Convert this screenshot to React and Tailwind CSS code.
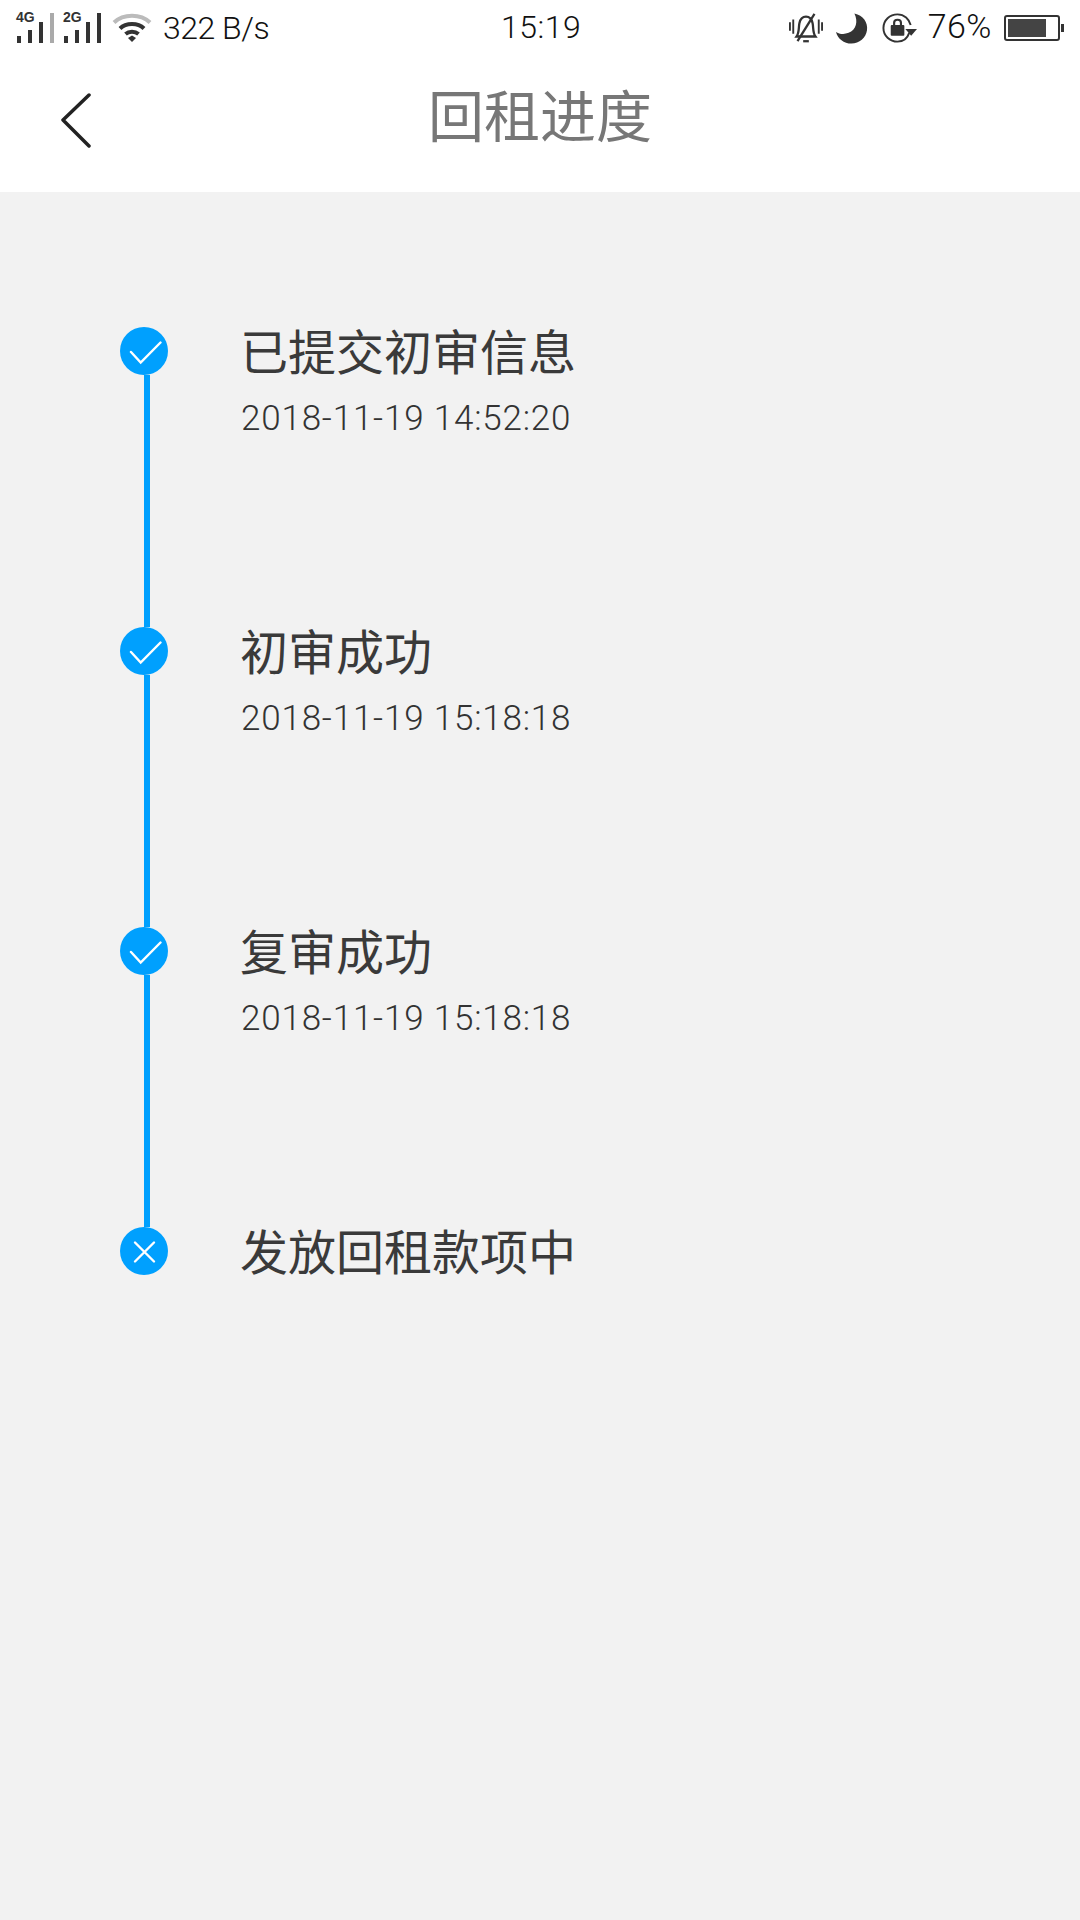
const cjk = "font-['Liberation_Sans','Noto_Sans_CJK_SC',sans-serif]";

const steps = [
  { title: "已提交初审信息", time: "2018-11-19 14:52:20", done: true },
  { title: "初审成功", time: "2018-11-19 15:18:18", done: true },
  { title: "复审成功", time: "2018-11-19 15:18:18", done: true },
  { title: "发放回租款项中", done: false },
];

// signal bars with the network label above them
const Signal = ({ label, last }) => (
  <div className="relative w-[40px] h-[30px]">
    <span className="absolute left-0 top-[-3px] text-[14px] leading-[14px] font-bold text-[#333] font-['Liberation_Sans',sans-serif]">
      {label}
    </span>
    <svg width="40" height="30" viewBox="0 0 40 30" className="absolute left-0 top-0">
      <rect x="1" y="23" width="4" height="7" fill="#333" />
      <rect x="12" y="17" width="4" height="13" fill="#333" />
      <rect x="23" y="9" width="4" height="21" fill="#333" />
      <rect x="34" y="0" width="4" height="30" fill={last} />
    </svg>
  </div>
);

const Wifi = () => (
  <svg width="40" height="30" viewBox="0 0 40 30" fill="none" strokeWidth="4">
    <path d="M2 9.500C11.500 0.500 28.500 0.500 38 9.500" stroke="#bbb" />
    <path d="M8 15.500C14 9.500 26 9.500 32 15.500" stroke="#333" />
    <path d="M13.500 21C17 18 23 18 26.500 21" stroke="#333" />
    <path d="M16 25L20 22.500L24 25L20 29Z" fill="#333" />
  </svg>
);

const MutedBell = () => (
  <svg width="34" height="32" viewBox="0 0 36 32" fill="none" stroke="#333" strokeWidth="2.400">
    <path d="M8 25C11 21 10 16 11 11C12 6 15 4 18 4C21 4 24 6 25 11C26 16 25 21 28 25Z" />
    <path d="M27 1L9 30" />
    <path d="M15 30H21" />
    <path d="M1 10V19M4.500 7V22M31.500 7V22M35 10V19" strokeWidth="2" />
  </svg>
);

const Moon = () => (
  <svg width="33" height="32" viewBox="0 0 34 32">
    <path d="M20 1C29 3 34 10 33 18C32 26 25 32 17 32C9 32 3 27 1 20C4 22 9 23 14 21C22 18 24 9 20 1Z" fill="#333" />
  </svg>
);

const RotationLock = () => (
  <svg width="36" height="32" viewBox="0 0 37 32" fill="none">
    <path d="M29 21C27 27 22 30 17 30C9 30 2.500 24 2.500 16C2.500 8 9 2 17 2C24 2 29 7 30.500 13" stroke="#333" strokeWidth="2" />
    <path d="M25 17H37L31 24Z" fill="#333" />
    <rect x="10" y="13" width="14" height="11" rx="1" fill="#333" />
    <path d="M13.500 13V10.500C13.500 6.500 20.500 6.500 20.500 10.500V13" stroke="#333" strokeWidth="2.200" />
  </svg>
);

const Battery = () => (
  <div className="flex items-center">
    <div className="w-[56px] h-[26px] rounded-[3px] border-2 border-[#333] p-[2px] flex">
      <div className="w-[38px] bg-[#444]" />
    </div>
    <div className="w-[3px] h-[8px] ml-[1px] bg-[#333]" />
  </div>
);

const StatusBar = () => (
  <div className="relative h-[55px] flex items-center justify-between text-[#111] text-[32px] font-light leading-none font-['Roboto',sans-serif]">
    <div className="flex items-center pl-[16px] pt-[1px]">
      <Signal label="4G" last="#aaa" />
      <div className="w-[7px]" />
      <Signal label="2G" last="#333" />
      <div className="ml-[9px]"><Wifi /></div>
      <span className="ml-[11px] tracking-[-0.5px]">322 B/s</span>
    </div>
    <span className="absolute left-[501px] top-[11px] tracking-[0.5px]">15:19</span>
    <div className="flex items-center pr-[16px]">
      <MutedBell />
      <div className="ml-[12px]"><Moon /></div>
      <div className="ml-[13px]"><RotationLock /></div>
      <span className="ml-[11px] mr-[12px] text-[34px] tracking-[0.5px] -mt-[4px]">76%</span>
      <Battery />
    </div>
  </div>
);

const CheckMark = ({ done }) => (
  <div className="w-[48px] h-[48px] shrink-0 rounded-full bg-[#00a0fe] flex items-center justify-center">
    <svg width="36" height="32" viewBox="0 0 36 32" fill="none" stroke="#fff" strokeWidth="2.400" strokeLinecap="round">
      {done ? <path d="M5 17L14.700 27.500L34.500 7.500" /> : <path d="M9 7.500L28 26.500M28 7.500L9 26.500" />}
    </svg>
  </div>
);

const Step = ({ step, last }) => (
  <div className={`flex ${last ? "h-[48px]" : "h-[300px]"}`}>
    <div className="w-[48px] flex flex-col items-center">
      <CheckMark done={step.done} />
      {!last && <div className="flex-1 w-[6px] ml-[6px] bg-[#00a0fe]" />}
    </div>
    <div className="ml-[73px] pt-[3px]">
      <div className="-ml-[1px] text-[48px] leading-[48px] text-[#3a3a3a]">{step.title}</div>
      {step.time && (
        <div className="mt-[21px] text-[35px] leading-[40px] tracking-[0.8px] font-light text-[#333] font-['Roboto',sans-serif]">{step.time}</div>
      )}
    </div>
  </div>
);

export default function App() {
  return (
    <div className={`w-[1080px] h-[1920px] bg-[#f2f2f2] flex flex-col ${cjk}`}>
      <div className="bg-white h-[192px] shrink-0">
        <StatusBar />
        <div className="relative h-[136px] flex items-center justify-center">
          <svg width="32" height="56" viewBox="0 0 32 56" fill="none" stroke="#222" strokeWidth="3.500" strokeLinecap="round" strokeLinejoin="round" className="absolute left-[60px] top-[38px]">
            <path d="M29 2L3 27L29 53" />
          </svg>
          <span className="text-[56px] leading-none text-[#777] -mt-[11px]">回租进度</span>
        </div>
      </div>

      {/* Progress timeline */}
      <div className="pl-[120px] pt-[135px]">
        {steps.map((step, i) => (
          <Step key={step.title} step={step} last={i === steps.length - 1} />
        ))}
      </div>
    </div>
  );
}
